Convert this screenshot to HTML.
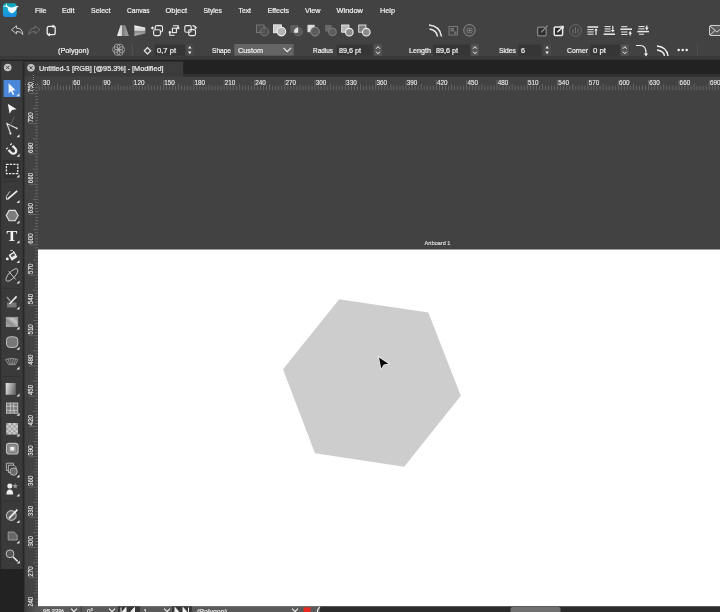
<!DOCTYPE html>
<html lang="en"><head><meta charset="utf-8"><title>Untitled-1 [RGB] - Polygon</title>
<style>
html,body{margin:0;padding:0;background:#424242;overflow:hidden}
body{width:720px;height:612px;font-family:"Liberation Sans",sans-serif}
svg{display:block;will-change:transform;filter:blur(0.35px);font-family:"Liberation Sans",sans-serif}
</style></head><body>
<svg width="720" height="612" viewBox="0 0 720 612">
<rect x="0" y="0" width="720" height="612" fill="#424242" />
<rect x="0" y="0" width="720" height="56" fill="#424242" />
<rect x="0" y="56" width="720" height="3.6" fill="#3a3a3a" />
<rect x="0" y="59.6" width="720" height="1.9" fill="#242424" />
<rect x="24.5" y="61" width="696" height="13" fill="#222222" />
<rect x="183" y="74" width="537" height="2.7" fill="#303030" />
<rect x="24.5" y="61.6" width="158.7" height="12.4" fill="#3c3c3c" />
<rect x="24.5" y="74" width="158.7" height="2.2" fill="#3a3a3a" />
<rect x="0" y="61" width="22.5" height="508" fill="#3a3a3a" />
<rect x="22.5" y="61" width="2" height="508" fill="#282828" />
<rect x="38" y="249.5" width="682" height="357" fill="#ffffff" />
<path d="M39.17 85.6V90.3M42.20 80V90.3M45.23 85.6V90.3M48.26 85.6V90.3M51.30 85.6V90.3M54.33 85.6V90.3M57.36 84V90.3M60.39 85.6V90.3M63.42 85.6V90.3M66.46 85.6V90.3M69.49 85.6V90.3M72.52 80V90.3M75.55 85.6V90.3M78.58 85.6V90.3M81.62 85.6V90.3M84.65 85.6V90.3M87.68 84V90.3M90.71 85.6V90.3M93.74 85.6V90.3M96.78 85.6V90.3M99.81 85.6V90.3M102.84 80V90.3M105.87 85.6V90.3M108.90 85.6V90.3M111.94 85.6V90.3M114.97 85.6V90.3M118.00 84V90.3M121.03 85.6V90.3M124.06 85.6V90.3M127.10 85.6V90.3M130.13 85.6V90.3M133.16 80V90.3M136.19 85.6V90.3M139.22 85.6V90.3M142.26 85.6V90.3M145.29 85.6V90.3M148.32 84V90.3M151.35 85.6V90.3M154.38 85.6V90.3M157.42 85.6V90.3M160.45 85.6V90.3M163.48 80V90.3M166.51 85.6V90.3M169.54 85.6V90.3M172.58 85.6V90.3M175.61 85.6V90.3M178.64 84V90.3M181.67 85.6V90.3M184.70 85.6V90.3M187.74 85.6V90.3M190.77 85.6V90.3M193.80 80V90.3M196.83 85.6V90.3M199.86 85.6V90.3M202.90 85.6V90.3M205.93 85.6V90.3M208.96 84V90.3M211.99 85.6V90.3M215.02 85.6V90.3M218.06 85.6V90.3M221.09 85.6V90.3M224.12 80V90.3M227.15 85.6V90.3M230.18 85.6V90.3M233.22 85.6V90.3M236.25 85.6V90.3M239.28 84V90.3M242.31 85.6V90.3M245.34 85.6V90.3M248.38 85.6V90.3M251.41 85.6V90.3M254.44 80V90.3M257.47 85.6V90.3M260.50 85.6V90.3M263.54 85.6V90.3M266.57 85.6V90.3M269.60 84V90.3M272.63 85.6V90.3M275.66 85.6V90.3M278.70 85.6V90.3M281.73 85.6V90.3M284.76 80V90.3M287.79 85.6V90.3M290.82 85.6V90.3M293.86 85.6V90.3M296.89 85.6V90.3M299.92 84V90.3M302.95 85.6V90.3M305.98 85.6V90.3M309.02 85.6V90.3M312.05 85.6V90.3M315.08 80V90.3M318.11 85.6V90.3M321.14 85.6V90.3M324.18 85.6V90.3M327.21 85.6V90.3M330.24 84V90.3M333.27 85.6V90.3M336.30 85.6V90.3M339.34 85.6V90.3M342.37 85.6V90.3M345.40 80V90.3M348.43 85.6V90.3M351.46 85.6V90.3M354.50 85.6V90.3M357.53 85.6V90.3M360.56 84V90.3M363.59 85.6V90.3M366.62 85.6V90.3M369.66 85.6V90.3M372.69 85.6V90.3M375.72 80V90.3M378.75 85.6V90.3M381.78 85.6V90.3M384.82 85.6V90.3M387.85 85.6V90.3M390.88 84V90.3M393.91 85.6V90.3M396.94 85.6V90.3M399.98 85.6V90.3M403.01 85.6V90.3M406.04 80V90.3M409.07 85.6V90.3M412.10 85.6V90.3M415.14 85.6V90.3M418.17 85.6V90.3M421.20 84V90.3M424.23 85.6V90.3M427.26 85.6V90.3M430.30 85.6V90.3M433.33 85.6V90.3M436.36 80V90.3M439.39 85.6V90.3M442.42 85.6V90.3M445.46 85.6V90.3M448.49 85.6V90.3M451.52 84V90.3M454.55 85.6V90.3M457.58 85.6V90.3M460.62 85.6V90.3M463.65 85.6V90.3M466.68 80V90.3M469.71 85.6V90.3M472.74 85.6V90.3M475.78 85.6V90.3M478.81 85.6V90.3M481.84 84V90.3M484.87 85.6V90.3M487.90 85.6V90.3M490.94 85.6V90.3M493.97 85.6V90.3M497.00 80V90.3M500.03 85.6V90.3M503.06 85.6V90.3M506.10 85.6V90.3M509.13 85.6V90.3M512.16 84V90.3M515.19 85.6V90.3M518.22 85.6V90.3M521.26 85.6V90.3M524.29 85.6V90.3M527.32 80V90.3M530.35 85.6V90.3M533.38 85.6V90.3M536.42 85.6V90.3M539.45 85.6V90.3M542.48 84V90.3M545.51 85.6V90.3M548.54 85.6V90.3M551.58 85.6V90.3M554.61 85.6V90.3M557.64 80V90.3M560.67 85.6V90.3M563.70 85.6V90.3M566.74 85.6V90.3M569.77 85.6V90.3M572.80 84V90.3M575.83 85.6V90.3M578.86 85.6V90.3M581.90 85.6V90.3M584.93 85.6V90.3M587.96 80V90.3M590.99 85.6V90.3M594.02 85.6V90.3M597.06 85.6V90.3M600.09 85.6V90.3M603.12 84V90.3M606.15 85.6V90.3M609.18 85.6V90.3M612.22 85.6V90.3M615.25 85.6V90.3M618.28 80V90.3M621.31 85.6V90.3M624.34 85.6V90.3M627.38 85.6V90.3M630.41 85.6V90.3M633.44 84V90.3M636.47 85.6V90.3M639.50 85.6V90.3M642.54 85.6V90.3M645.57 85.6V90.3M648.60 80V90.3M651.63 85.6V90.3M654.66 85.6V90.3M657.70 85.6V90.3M660.73 85.6V90.3M663.76 84V90.3M666.79 85.6V90.3M669.82 85.6V90.3M672.86 85.6V90.3M675.89 85.6V90.3M678.92 80V90.3M681.95 85.6V90.3M684.98 85.6V90.3M688.02 85.6V90.3M691.05 85.6V90.3M694.08 84V90.3M697.11 85.6V90.3M700.14 85.6V90.3M703.18 85.6V90.3M706.21 85.6V90.3M709.24 80V90.3M712.27 85.6V90.3M715.30 85.6V90.3M718.34 85.6V90.3M721.37 85.6V90.3" stroke="#707070" stroke-width="0.75" fill="none"/>
<text x="42.9" y="85.1" font-size="7" fill="#f0f0f0" stroke="#f0f0f0" stroke-width="0.1" textLength="7.0" lengthAdjust="spacingAndGlyphs" >30</text>
<text x="73.22" y="85.1" font-size="7" fill="#f0f0f0" stroke="#f0f0f0" stroke-width="0.1" textLength="7.0" lengthAdjust="spacingAndGlyphs" >60</text>
<text x="103.54" y="85.1" font-size="7" fill="#f0f0f0" stroke="#f0f0f0" stroke-width="0.1" textLength="7.0" lengthAdjust="spacingAndGlyphs" >90</text>
<text x="133.86" y="85.1" font-size="7" fill="#f0f0f0" stroke="#f0f0f0" stroke-width="0.1" textLength="10.6" lengthAdjust="spacingAndGlyphs" >120</text>
<text x="164.18" y="85.1" font-size="7" fill="#f0f0f0" stroke="#f0f0f0" stroke-width="0.1" textLength="10.6" lengthAdjust="spacingAndGlyphs" >150</text>
<text x="194.5" y="85.1" font-size="7" fill="#f0f0f0" stroke="#f0f0f0" stroke-width="0.1" textLength="10.6" lengthAdjust="spacingAndGlyphs" >180</text>
<text x="224.82" y="85.1" font-size="7" fill="#f0f0f0" stroke="#f0f0f0" stroke-width="0.1" textLength="10.6" lengthAdjust="spacingAndGlyphs" >210</text>
<text x="255.14" y="85.1" font-size="7" fill="#f0f0f0" stroke="#f0f0f0" stroke-width="0.1" textLength="10.6" lengthAdjust="spacingAndGlyphs" >240</text>
<text x="285.46" y="85.1" font-size="7" fill="#f0f0f0" stroke="#f0f0f0" stroke-width="0.1" textLength="10.6" lengthAdjust="spacingAndGlyphs" >270</text>
<text x="315.78" y="85.1" font-size="7" fill="#f0f0f0" stroke="#f0f0f0" stroke-width="0.1" textLength="10.6" lengthAdjust="spacingAndGlyphs" >300</text>
<text x="346.1" y="85.1" font-size="7" fill="#f0f0f0" stroke="#f0f0f0" stroke-width="0.1" textLength="10.6" lengthAdjust="spacingAndGlyphs" >330</text>
<text x="376.42" y="85.1" font-size="7" fill="#f0f0f0" stroke="#f0f0f0" stroke-width="0.1" textLength="10.6" lengthAdjust="spacingAndGlyphs" >360</text>
<text x="406.74" y="85.1" font-size="7" fill="#f0f0f0" stroke="#f0f0f0" stroke-width="0.1" textLength="10.6" lengthAdjust="spacingAndGlyphs" >390</text>
<text x="437.06" y="85.1" font-size="7" fill="#f0f0f0" stroke="#f0f0f0" stroke-width="0.1" textLength="10.6" lengthAdjust="spacingAndGlyphs" >420</text>
<text x="467.38" y="85.1" font-size="7" fill="#f0f0f0" stroke="#f0f0f0" stroke-width="0.1" textLength="10.6" lengthAdjust="spacingAndGlyphs" >450</text>
<text x="497.7" y="85.1" font-size="7" fill="#f0f0f0" stroke="#f0f0f0" stroke-width="0.1" textLength="10.6" lengthAdjust="spacingAndGlyphs" >480</text>
<text x="528.02" y="85.1" font-size="7" fill="#f0f0f0" stroke="#f0f0f0" stroke-width="0.1" textLength="10.6" lengthAdjust="spacingAndGlyphs" >510</text>
<text x="558.34" y="85.1" font-size="7" fill="#f0f0f0" stroke="#f0f0f0" stroke-width="0.1" textLength="10.6" lengthAdjust="spacingAndGlyphs" >540</text>
<text x="588.66" y="85.1" font-size="7" fill="#f0f0f0" stroke="#f0f0f0" stroke-width="0.1" textLength="10.6" lengthAdjust="spacingAndGlyphs" >570</text>
<text x="618.98" y="85.1" font-size="7" fill="#f0f0f0" stroke="#f0f0f0" stroke-width="0.1" textLength="10.6" lengthAdjust="spacingAndGlyphs" >600</text>
<text x="649.3" y="85.1" font-size="7" fill="#f0f0f0" stroke="#f0f0f0" stroke-width="0.1" textLength="10.6" lengthAdjust="spacingAndGlyphs" >630</text>
<text x="679.62" y="85.1" font-size="7" fill="#f0f0f0" stroke="#f0f0f0" stroke-width="0.1" textLength="10.6" lengthAdjust="spacingAndGlyphs" >660</text>
<text x="709.94" y="85.1" font-size="7" fill="#f0f0f0" stroke="#f0f0f0" stroke-width="0.1" textLength="10.6" lengthAdjust="spacingAndGlyphs" >690</text>
<text x="740.26" y="85.1" font-size="7" fill="#f0f0f0" stroke="#f0f0f0" stroke-width="0.1" textLength="10.6" lengthAdjust="spacingAndGlyphs" >720</text>
<path d="M35 605.15H38M35 602.12H38M35 599.10H38M35 596.07H38M33 593.04H38M35 590.01H38M35 586.98H38M35 583.96H38M35 580.93H38M29 577.90H38M35 574.87H38M35 571.84H38M35 568.82H38M35 565.79H38M33 562.76H38M35 559.73H38M35 556.70H38M35 553.68H38M35 550.65H38M29 547.62H38M35 544.59H38M35 541.56H38M35 538.54H38M35 535.51H38M33 532.48H38M35 529.45H38M35 526.42H38M35 523.40H38M35 520.37H38M29 517.34H38M35 514.31H38M35 511.28H38M35 508.26H38M35 505.23H38M33 502.20H38M35 499.17H38M35 496.14H38M35 493.12H38M35 490.09H38M29 487.06H38M35 484.03H38M35 481.00H38M35 477.98H38M35 474.95H38M33 471.92H38M35 468.89H38M35 465.86H38M35 462.84H38M35 459.81H38M29 456.78H38M35 453.75H38M35 450.72H38M35 447.70H38M35 444.67H38M33 441.64H38M35 438.61H38M35 435.58H38M35 432.56H38M35 429.53H38M29 426.50H38M35 423.47H38M35 420.44H38M35 417.42H38M35 414.39H38M33 411.36H38M35 408.33H38M35 405.30H38M35 402.28H38M35 399.25H38M29 396.22H38M35 393.19H38M35 390.16H38M35 387.14H38M35 384.11H38M33 381.08H38M35 378.05H38M35 375.02H38M35 372.00H38M35 368.97H38M29 365.94H38M35 362.91H38M35 359.88H38M35 356.86H38M35 353.83H38M33 350.80H38M35 347.77H38M35 344.74H38M35 341.72H38M35 338.69H38M29 335.66H38M35 332.63H38M35 329.60H38M35 326.58H38M35 323.55H38M33 320.52H38M35 317.49H38M35 314.46H38M35 311.44H38M35 308.41H38M29 305.38H38M35 302.35H38M35 299.32H38M35 296.30H38M35 293.27H38M33 290.24H38M35 287.21H38M35 284.18H38M35 281.16H38M35 278.13H38M29 275.10H38M35 272.07H38M35 269.04H38M35 266.02H38M35 262.99H38M33 259.96H38M35 256.93H38M35 253.90H38M35 250.88H38M35 247.85H38M29 244.82H38M35 241.79H38M35 238.76H38M35 235.74H38M35 232.71H38M33 229.68H38M35 226.65H38M35 223.62H38M35 220.60H38M35 217.57H38M29 214.54H38M35 211.51H38M35 208.48H38M35 205.46H38M35 202.43H38M33 199.40H38M35 196.37H38M35 193.34H38M35 190.32H38M35 187.29H38M29 184.26H38M35 181.23H38M35 178.20H38M35 175.18H38M35 172.15H38M33 169.12H38M35 166.09H38M35 163.06H38M35 160.04H38M35 157.01H38M29 153.98H38M35 150.95H38M35 147.92H38M35 144.90H38M35 141.87H38M33 138.84H38M35 135.81H38M35 132.78H38M35 129.76H38M35 126.73H38M29 123.70H38M35 120.67H38M35 117.64H38M35 114.62H38M35 111.59H38M33 108.56H38M35 105.53H38M35 102.50H38M35 99.48H38M35 96.45H38M29 93.42H38M35 90.39H38M35 87.36H38M35 84.34H38" stroke="#707070" stroke-width="0.75" fill="none"/>
<path d="M33.4 75V90M25 84.3H38" stroke="#a8a8a8" stroke-width="0.9" stroke-dasharray="1 1" fill="none"/><path d="M33.4 76V90M26 84.3H38" stroke="#1c1c1c" stroke-width="0.9" stroke-dasharray="1 1" fill="none"/>
<text transform="translate(33.3 607.08) rotate(-90)" font-size="7" fill="#f0f0f0" stroke="#f0f0f0" stroke-width="0.1" textLength="10.4" lengthAdjust="spacingAndGlyphs">240</text>
<text transform="translate(33.3 576.80) rotate(-90)" font-size="7" fill="#f0f0f0" stroke="#f0f0f0" stroke-width="0.1" textLength="10.4" lengthAdjust="spacingAndGlyphs">270</text>
<text transform="translate(33.3 546.52) rotate(-90)" font-size="7" fill="#f0f0f0" stroke="#f0f0f0" stroke-width="0.1" textLength="10.4" lengthAdjust="spacingAndGlyphs">300</text>
<text transform="translate(33.3 516.24) rotate(-90)" font-size="7" fill="#f0f0f0" stroke="#f0f0f0" stroke-width="0.1" textLength="10.4" lengthAdjust="spacingAndGlyphs">330</text>
<text transform="translate(33.3 485.96) rotate(-90)" font-size="7" fill="#f0f0f0" stroke="#f0f0f0" stroke-width="0.1" textLength="10.4" lengthAdjust="spacingAndGlyphs">360</text>
<text transform="translate(33.3 455.68) rotate(-90)" font-size="7" fill="#f0f0f0" stroke="#f0f0f0" stroke-width="0.1" textLength="10.4" lengthAdjust="spacingAndGlyphs">390</text>
<text transform="translate(33.3 425.40) rotate(-90)" font-size="7" fill="#f0f0f0" stroke="#f0f0f0" stroke-width="0.1" textLength="10.4" lengthAdjust="spacingAndGlyphs">420</text>
<text transform="translate(33.3 395.12) rotate(-90)" font-size="7" fill="#f0f0f0" stroke="#f0f0f0" stroke-width="0.1" textLength="10.4" lengthAdjust="spacingAndGlyphs">450</text>
<text transform="translate(33.3 364.84) rotate(-90)" font-size="7" fill="#f0f0f0" stroke="#f0f0f0" stroke-width="0.1" textLength="10.4" lengthAdjust="spacingAndGlyphs">480</text>
<text transform="translate(33.3 334.56) rotate(-90)" font-size="7" fill="#f0f0f0" stroke="#f0f0f0" stroke-width="0.1" textLength="10.4" lengthAdjust="spacingAndGlyphs">510</text>
<text transform="translate(33.3 304.28) rotate(-90)" font-size="7" fill="#f0f0f0" stroke="#f0f0f0" stroke-width="0.1" textLength="10.4" lengthAdjust="spacingAndGlyphs">540</text>
<text transform="translate(33.3 274.00) rotate(-90)" font-size="7" fill="#f0f0f0" stroke="#f0f0f0" stroke-width="0.1" textLength="10.4" lengthAdjust="spacingAndGlyphs">570</text>
<text transform="translate(33.3 243.72) rotate(-90)" font-size="7" fill="#f0f0f0" stroke="#f0f0f0" stroke-width="0.1" textLength="10.4" lengthAdjust="spacingAndGlyphs">600</text>
<text transform="translate(33.3 213.44) rotate(-90)" font-size="7" fill="#f0f0f0" stroke="#f0f0f0" stroke-width="0.1" textLength="10.4" lengthAdjust="spacingAndGlyphs">630</text>
<text transform="translate(33.3 183.16) rotate(-90)" font-size="7" fill="#f0f0f0" stroke="#f0f0f0" stroke-width="0.1" textLength="10.4" lengthAdjust="spacingAndGlyphs">660</text>
<text transform="translate(33.3 152.88) rotate(-90)" font-size="7" fill="#f0f0f0" stroke="#f0f0f0" stroke-width="0.1" textLength="10.4" lengthAdjust="spacingAndGlyphs">690</text>
<text transform="translate(33.3 122.60) rotate(-90)" font-size="7" fill="#f0f0f0" stroke="#f0f0f0" stroke-width="0.1" textLength="10.4" lengthAdjust="spacingAndGlyphs">720</text>
<text transform="translate(33.3 92.32) rotate(-90)" font-size="7" fill="#f0f0f0" stroke="#f0f0f0" stroke-width="0.1" textLength="10.4" lengthAdjust="spacingAndGlyphs">750</text>
<polygon points="339.2,299.2 428.3,312.5 460.8,395.8 404.2,466.7 315,453.3 283,369.2" fill="#cdcdcd"/>
<text x="424.6" y="245.1" font-size="6.2" fill="#e6e6e6" stroke="#e6e6e6" stroke-width="0.1" textLength="25.8" lengthAdjust="spacingAndGlyphs" >Artboard 1</text>
<path d="M379 357.4L388.4 363.7L383.8 364.6L381.2 368.4Z" fill="#060606" stroke="#f6f6f6" stroke-width="1.3" paint-order="stroke"/>
<text x="35" y="13.2" font-size="7.8" fill="#f0f0f0" stroke="#f0f0f0" stroke-width="0.22" textLength="11.5" lengthAdjust="spacingAndGlyphs" >File</text>
<text x="62" y="13.2" font-size="7.8" fill="#f0f0f0" stroke="#f0f0f0" stroke-width="0.22" textLength="12.5" lengthAdjust="spacingAndGlyphs" >Edit</text>
<text x="91" y="13.2" font-size="7.8" fill="#f0f0f0" stroke="#f0f0f0" stroke-width="0.22" textLength="19.5" lengthAdjust="spacingAndGlyphs" >Select</text>
<text x="127" y="13.2" font-size="7.8" fill="#f0f0f0" stroke="#f0f0f0" stroke-width="0.22" textLength="22.5" lengthAdjust="spacingAndGlyphs" >Canvas</text>
<text x="165.5" y="13.2" font-size="7.8" fill="#f0f0f0" stroke="#f0f0f0" stroke-width="0.22" textLength="21.5" lengthAdjust="spacingAndGlyphs" >Object</text>
<text x="203.5" y="13.2" font-size="7.8" fill="#f0f0f0" stroke="#f0f0f0" stroke-width="0.22" textLength="18.5" lengthAdjust="spacingAndGlyphs" >Styles</text>
<text x="238.5" y="13.2" font-size="7.8" fill="#f0f0f0" stroke="#f0f0f0" stroke-width="0.22" textLength="12.5" lengthAdjust="spacingAndGlyphs" >Text</text>
<text x="267.5" y="13.2" font-size="7.8" fill="#f0f0f0" stroke="#f0f0f0" stroke-width="0.22" textLength="21.5" lengthAdjust="spacingAndGlyphs" >Effects</text>
<text x="305" y="13.2" font-size="7.8" fill="#f0f0f0" stroke="#f0f0f0" stroke-width="0.22" textLength="15.5" lengthAdjust="spacingAndGlyphs" >View</text>
<text x="336.5" y="13.2" font-size="7.8" fill="#f0f0f0" stroke="#f0f0f0" stroke-width="0.22" textLength="26.5" lengthAdjust="spacingAndGlyphs" >Window</text>
<text x="380" y="13.2" font-size="7.8" fill="#f0f0f0" stroke="#f0f0f0" stroke-width="0.22" textLength="15" lengthAdjust="spacingAndGlyphs" >Help</text>
<defs><linearGradient id="lg" x1="0" y1="0" x2="0" y2="1"><stop offset="0" stop-color="#12a9b6"/><stop offset="0.45" stop-color="#14a6d2"/><stop offset="1" stop-color="#1c8de6"/></linearGradient></defs><rect x="2.9" y="3.2" width="13.8" height="13.8" rx="3" fill="url(#lg)"/><path d="M2.5 6.3L5.9 5.5L6.3 2.4L6.9 5.6L8.2 6.6Q12.4 8.6 16 6L19 6.1L17 7.6Q15.2 13 11.6 13.2Q8.2 12.6 7.6 7.6L5.6 6.8Z" fill="#f2fbff"/>
<rect x="154.5" y="44.5" width="30.5" height="11.2" fill="#363636" />
<rect x="336.5" y="44.5" width="36.0" height="11.2" fill="#363636" />
<rect x="433" y="44.5" width="37" height="11.2" fill="#363636" />
<rect x="518" y="44.5" width="23.5" height="11.2" fill="#363636" />
<rect x="590" y="44.5" width="30" height="11.2" fill="#363636" />
<rect x="234.3" y="44" width="59.4" height="11.6" fill="#646464" />
<text x="58" y="53.4" font-size="7.8" fill="#f0f0f0" stroke="#f0f0f0" stroke-width="0.22" textLength="31" lengthAdjust="spacingAndGlyphs" >(Polygon)</text>
<text x="157" y="53.4" font-size="7.8" fill="#f0f0f0" stroke="#f0f0f0" stroke-width="0.22" textLength="19" lengthAdjust="spacingAndGlyphs" >0,7 pt</text>
<text x="212" y="53.4" font-size="7.8" fill="#f0f0f0" stroke="#f0f0f0" stroke-width="0.22" textLength="19" lengthAdjust="spacingAndGlyphs" >Shape</text>
<text x="238" y="53.4" font-size="7.8" fill="#f0f0f0" stroke="#f0f0f0" stroke-width="0.22" textLength="25" lengthAdjust="spacingAndGlyphs" >Custom</text>
<text x="313" y="53.4" font-size="7.8" fill="#f0f0f0" stroke="#f0f0f0" stroke-width="0.22" textLength="20" lengthAdjust="spacingAndGlyphs" >Radius</text>
<text x="339" y="53.4" font-size="7.8" fill="#f0f0f0" stroke="#f0f0f0" stroke-width="0.22" textLength="22" lengthAdjust="spacingAndGlyphs" >89,6 pt</text>
<text x="409" y="53.4" font-size="7.8" fill="#f0f0f0" stroke="#f0f0f0" stroke-width="0.22" textLength="22" lengthAdjust="spacingAndGlyphs" >Length</text>
<text x="436" y="53.4" font-size="7.8" fill="#f0f0f0" stroke="#f0f0f0" stroke-width="0.22" textLength="22" lengthAdjust="spacingAndGlyphs" >89,6 pt</text>
<text x="499" y="53.4" font-size="7.8" fill="#f0f0f0" stroke="#f0f0f0" stroke-width="0.22" textLength="17" lengthAdjust="spacingAndGlyphs" >Sides</text>
<text x="521" y="53.4" font-size="7.8" fill="#f0f0f0" stroke="#f0f0f0" stroke-width="0.22" textLength="4" lengthAdjust="spacingAndGlyphs" >6</text>
<text x="567" y="53.4" font-size="7.8" fill="#f0f0f0" stroke="#f0f0f0" stroke-width="0.22" textLength="21" lengthAdjust="spacingAndGlyphs" >Corner</text>
<text x="593" y="53.4" font-size="7.8" fill="#f0f0f0" stroke="#f0f0f0" stroke-width="0.22" textLength="13" lengthAdjust="spacingAndGlyphs" >0 pt</text>
<path d="M283.5 47.8L287.2 51.6L291 47.8" stroke="#f0f0f0" stroke-width="1.2" fill="none"/>
<rect x="186" y="44.5" width="7.6" height="11.2" fill="#4a4a4a" />
<path d="M188.10000000000002 48.6L189.8 46L191.5 48.6ZM188.10000000000002 51.6L189.8 54.2L191.5 51.6Z" fill="#f0f0f0"/>
<rect x="374.2" y="44.5" width="7.6" height="11.2" fill="#555555" />
<path d="M376.1 48.7L378.0 46.7L379.9 48.7M376.1 51.7L378.0 53.7L379.9 51.7" stroke="#f0f0f0" stroke-width="1" fill="none"/>
<rect x="471.2" y="44.5" width="7.6" height="11.2" fill="#555555" />
<path d="M473.1 48.7L475.0 46.7L476.9 48.7M473.1 51.7L475.0 53.7L476.9 51.7" stroke="#f0f0f0" stroke-width="1" fill="none"/>
<rect x="543.3" y="44.5" width="7.6" height="11.2" fill="#4a4a4a" />
<path d="M545.3999999999999 48.6L547.0999999999999 46L548.8 48.6ZM545.3999999999999 51.6L547.0999999999999 54.2L548.8 51.6Z" fill="#f0f0f0"/>
<rect x="621" y="44.5" width="7.6" height="11.2" fill="#555555" />
<path d="M622.9 48.7L624.8 46.7L626.6999999999999 48.7M622.9 51.7L624.8 53.7L626.6999999999999 51.7" stroke="#f0f0f0" stroke-width="1" fill="none"/>
<rect x="131.8" y="44" width="0.8" height="12" fill="#5a5a5a" />
<rect x="697.2" y="44" width="0.8" height="12" fill="#525252" />
<g stroke="#bcbcbc" stroke-width="0.65" fill="none"><circle cx="121.60" cy="49.70" r="3.0"/><circle cx="120.10" cy="52.30" r="3.0"/><circle cx="117.10" cy="52.30" r="3.0"/><circle cx="115.60" cy="49.70" r="3.0"/><circle cx="117.10" cy="47.10" r="3.0"/><circle cx="120.10" cy="47.10" r="3.0"/></g>
<path d="M147.5 47.6L150.7 50.8L147.5 54L144.3 50.8Z" stroke="#f0f0f0" stroke-width="1.2" fill="none"/>
<path d="M636 45.5H640.5Q646 45.5 646 53V55" stroke="#f0f0f0" stroke-width="1.2" fill="none"/><path d="M644 53.5H648L646 56.5Z" fill="#f0f0f0"/>
<path d="M657 46Q667 47 668 56M657 50Q664 51 664.5 56" stroke="#f0f0f0" stroke-width="1.3" fill="none"/>
<circle cx="678.7" cy="50" r="1.25" fill="#f0f0f0"/>
<circle cx="682.7" cy="50" r="1.25" fill="#f0f0f0"/>
<circle cx="686.7" cy="50" r="1.25" fill="#f0f0f0"/>
<path d="M11.5 29.8L16.5 25.8V28.2Q22.5 28 22.8 34.5Q21 31.2 16.5 31.5V33.8Z" stroke="#d8d8d8" stroke-width="0.9" fill="none"/>
<path d="M40 29.8L35 25.8V28.2Q29 28 28.7 34.5Q30.5 31.2 35 31.5V33.8Z" stroke="#777" stroke-width="0.9" fill="none"/>
<rect x="47.2" y="26.3" width="8" height="8.4" rx="2" stroke="#ececec" stroke-width="1.3" fill="none"/><path d="M52.5 24.5L55.5 26.3L52.5 28.2ZM50 32.8L47 34.7L50 36.5Z" fill="#ececec"/>
<defs><linearGradient id="g1" x1="0" x2="1"><stop offset="0" stop-color="#f6f6f6"/><stop offset="0.45" stop-color="#cfcfcf"/><stop offset="0.45" stop-color="#7c7c7c"/><stop offset="1" stop-color="#a4a4a4"/></linearGradient><linearGradient id="g2" x1="0" x2="0" y1="0" y2="1"><stop offset="0" stop-color="#f6f6f6"/><stop offset="0.5" stop-color="#cacaca"/><stop offset="0.5" stop-color="#808080"/><stop offset="1" stop-color="#b4b4b4"/></linearGradient></defs>
<path d="M120.5 25.3H125.3L128.8 36H117Z" fill="url(#g1)"/>
<path d="M134.3 25.2L145.3 27.6V33.4L134.3 36Z" fill="url(#g2)"/>
<g stroke="#ececec" stroke-width="1.1" fill="none"><rect x="155.2" y="25.6" width="7.3" height="6.4" rx="1.6"/><rect x="153.6" y="29.8" width="6.8" height="5.8" rx="1.5" fill="#404040"/><path d="M154.4 28H152.4"/></g><path d="M150.6 28L153 26.2V29.8Z" fill="#ececec"/>
<g stroke="#ececec" stroke-width="1.1" fill="none"><rect x="172.4" y="28.2" width="4" height="4.4"/><path d="M169.8 33V35.2H174.6M173 25.8H178.2V27.4"/></g><circle cx="169.9" cy="32.3" r="1.25" fill="#ececec"/><circle cx="178.2" cy="28" r="1.25" fill="#ececec"/>
<g stroke="#ececec" stroke-width="1.1" fill="none"><rect x="184.8" y="25.6" width="6.4" height="6.6" rx="1.5"/><rect x="188.7" y="29.6" width="6.8" height="6" rx="1.5"/><path d="M192.5 25.6Q195.5 25.8 195.7 27.6"/></g><path d="M194.1 27.2H197.3L195.7 29.4Z" fill="#ececec"/>
<g stroke="#7c7c7c" stroke-width="0.9" fill="none"><rect x="256.5" y="25" width="7.6" height="7.6" fill="#4c4c4c"/><circle cx="264.4" cy="31.7" r="4.2" fill="#565656" fill-opacity="0.7"/></g>
<rect x="273.4" y="24.8" width="8" height="8" fill="#cfcfcf" stroke="#ededed" stroke-width="0.8"/><circle cx="281.4" cy="31.6" r="4.3" fill="#b4b4b4" stroke="#f2f2f2" stroke-width="1.1"/>
<rect x="290.4" y="25" width="7.8" height="7.8" fill="#5e5e5e"/><circle cx="298" cy="31.6" r="4.3" fill="#585858" stroke="#6a6a6a" stroke-width="0.9"/><path d="M294.2 30.5Q295 27.6 298.2 27.4V32.8H294Z" fill="#e4e4e4"/>
<rect x="307.5" y="24.8" width="7.2" height="7.4" fill="#dedede"/><circle cx="315" cy="31.6" r="4.4" fill="#5c5c5c" stroke="#8c8c8c" stroke-width="0.9"/>
<rect x="325.1" y="25" width="6.6" height="6.6" fill="#6a6a6a"/><circle cx="332.5" cy="32" r="3.9" fill="#5c5c5c" stroke="#808080" stroke-width="0.9"/>
<rect x="341.7" y="25" width="7.2" height="7.2" fill="#b4b4b4" stroke="#ececec" stroke-width="0.9"/><circle cx="349.3" cy="32.2" r="3.8" fill="#8c8c8c" stroke="#f2f2f2" stroke-width="1.1"/>
<rect x="358.7" y="25" width="7.2" height="7.2" fill="#7a7a7a" stroke="#e8e8e8" stroke-width="0.9"/><circle cx="366.3" cy="32.2" r="3.8" fill="#8a8a8a" stroke="#f2f2f2" stroke-width="1.1"/>
<path d="M429 25Q440 26 441.5 36.5M429.5 29Q436.5 30 437.5 36.5" stroke="#ececec" stroke-width="1.5" fill="none"/>
<g stroke="#808080" stroke-width="0.9" fill="none"><rect x="449" y="26.5" width="8.5" height="8.5"/></g><path d="M450.5 28H454V31.5H450.5ZM454 31.5H456.5V34H454Z" fill="#707070"/>
<circle cx="469.5" cy="30.3" r="5.7" stroke="#9a9a9a" stroke-width="0.9" fill="none"/><path d="M467 28.2H472V32.8H467ZM469.5 28.2V32.8M467 30.5H472" stroke="#8a8a8a" stroke-width="0.7" fill="none"/>
<rect x="537.6" y="27.2" width="8.6" height="8.6" rx="1.2" fill="#2e2e2e" stroke="#858585" stroke-width="1.3"/><path d="M543.6 25.6H548V29.8Z" fill="#404040"/><path d="M541.3 32.3L547.6 25.6" stroke="#8e8e8e" stroke-width="1.3"/>
<rect x="554.2" y="27" width="8.4" height="8.6" rx="1.3" fill="#2a2a2a" stroke="#ececec" stroke-width="1.5"/><path d="M559.6 24.8H565V30.4Z" fill="#404040"/><path d="M557.4 32.3L563 26.4" stroke="#ececec" stroke-width="1.4"/><path d="M560.4 25.8H563.8V29.2Z" fill="#ececec"/>
<circle cx="575.5" cy="30.4" r="5.9" stroke="#6e6e6e" stroke-width="0.9" fill="none"/><path d="M573 33.5V29M575.5 33.5V27M578 33.5V28.5" stroke="#767676" stroke-width="0.9"/>
<g stroke="#ececec" fill="none"><path d="M587.4 27H598.2" stroke-width="1.5"/><path d="M587.4 29.6H593.6M587.4 31.9H593.6M587.4 34.2H593.6" stroke-width="1"/><path d="M596 35V29.5" stroke-width="1.2"/><path d="M594.2 30.6L596 28.2L597.8 30.6Z" fill="#ececec" stroke="none"/></g>
<g stroke="#ececec" fill="none"><path d="M603.6 34.2H615" stroke-width="1.5"/><path d="M604.6 26.6H610.6M604.6 28.9H610.6M604.6 31.2H610.6" stroke-width="1"/><path d="M612.8 25.8V31" stroke-width="1.2"/><path d="M611 30L612.8 32.6L614.6 30Z" fill="#ececec" stroke="none"/></g>
<g stroke="#ececec" fill="none"><path d="M620.4 29.2H632" stroke-width="1.5"/><path d="M621.2 26.7H627.4M621.2 32H627.4M621.2 34.4H627.4" stroke-width="1"/><path d="M630.2 35.6V31.5" stroke-width="1.2"/><path d="M628.4 33.8L630.2 31.2L632 33.8Z" fill="#ececec" stroke="none"/></g>
<g stroke="#ececec" fill="none"><path d="M637.4 31.6H649" stroke-width="1.5"/><path d="M638.4 26.6H644.6M638.4 28.9H644.6M639 34.2H644" stroke-width="1"/><path d="M646.8 25.6V29" stroke-width="1.2"/><path d="M645 27.6L646.8 30.4L648.6 27.6Z" fill="#ececec" stroke="none"/></g>
<g stroke="#cfcfcf" stroke-width="1" fill="#5a5a5a"><rect x="709.5" y="25.5" width="14" height="10" rx="1.5"/><path d="M710 26L717 32L724 26M710 35L715 30.5" fill="none"/></g>
<circle cx="7.7" cy="67.5" r="3.8" fill="#c6c6c6"/><path d="M6.0 65.8L9.4 69.2M9.4 65.8L6.0 69.2" stroke="#444" stroke-width="1"/>
<circle cx="31" cy="67.8" r="3.8" fill="#c6c6c6"/><path d="M29.3 66.1L32.7 69.5M32.7 66.1L29.3 69.5" stroke="#444" stroke-width="1"/>
<text x="39" y="70.7" font-size="7.6" fill="#ececec" stroke="#ececec" stroke-width="0.22" textLength="124.5" lengthAdjust="spacingAndGlyphs" >Untitled-1 [RGB] [@95.3%] - [Modified]</text>
<rect x="0" y="61" width="1.3" height="508" fill="#2c2c2c" />
<rect x="3.6" y="80" width="16.8" height="17" fill="#4a87d9" />
<path d="M8.6 83.2L15.6 90.3L12.4 90.6L14.3 94.3L12.9 95L11 91.3L8.7 93.4Z" fill="#f4f8ff"/>
<path d="M19.4 93.3V96.3H16.4Z" fill="#e8e8e8"/>
<path d="M7.8 103.8L16.6 109.3L12 110L9.6 113.8Z" fill="#f4f4f4"/>
<path d="M6.6 122.8L10.6 133.6M6.8 123.6L17 128.4" stroke="#e0e0e0" stroke-width="1.15" fill="none"/><path d="M14.4 116.5L9.2 127.5" stroke="#6a6a6a" stroke-width="0.8"/><circle cx="10.5" cy="133.6" r="1.1" fill="#dcdcdc"/><circle cx="16.8" cy="128.4" r="0.9" fill="#dcdcdc"/>
<path d="M19.5 134.3V137.3H16.5Z" fill="#e8e8e8"/>
<path d="M12.6 145.9L15.4 148.8A2.9 2.9 0 0 1 11.2 152.8L8.5 150" stroke="#ececec" stroke-width="2.3" fill="none"/><path d="M10.6 143.8L11.5 144.7M6.6 148L7.5 148.9" stroke="#ececec" stroke-width="2.3"/>
<path d="M19.599999999999998 153.8V156.8H16.599999999999998Z" fill="#e8e8e8"/>
<rect x="3.2" y="160" width="17.3" height="18.4" fill="#303030" />
<rect x="6.4" y="164.4" width="11.4" height="9.2" stroke="#ececec" stroke-width="1.3" stroke-dasharray="2.3 1.1" fill="none"/>
<path d="M19.5 174.4V177.4H16.5Z" fill="#e8e8e8"/>
<rect x="3" y="181" width="17" height="0.9" fill="#303030" />
<path d="M17.2 190.8L7.6 199.2" stroke="#ececec" stroke-width="1.7" fill="none"/><path d="M9.8 191.4L6.3 196.6L6.6 199.6L8 199" stroke="#d8d8d8" stroke-width="0.9" fill="none"/>
<path d="M19.5 200V203H16.5Z" fill="#e8e8e8"/>
<path d="M9.2 210.4H15.2L18.2 215.6L15.2 220.8H9.2L6.2 215.6Z" fill="#7c7c7c" stroke="#e4e4e4" stroke-width="1.1"/>
<path d="M19.5 220.6V223.6H16.5Z" fill="#e8e8e8"/>
<text x="6.6" y="240.9" font-family="'Liberation Serif',serif" font-weight="bold" font-size="15.5" fill="#f4f4f4" textLength="10.8" lengthAdjust="spacingAndGlyphs">T</text>
<path d="M19.5 240.2V243.2H16.5Z" fill="#e8e8e8"/>
<path d="M8.6 255L14.2 251.6L17.4 257L11.8 260.8Z" fill="#ececec"/><path d="M10.6 255.2L13.8 253.3L15 255.3L11.8 257.2Z" fill="#4c4c4c"/><circle cx="7.3" cy="258.9" r="1.45" fill="#ececec"/><path d="M10.2 250.4Q12.6 249.6 14 252" stroke="#d8d8d8" stroke-width="0.9" fill="none"/>
<path d="M19.5 260V263H16.5Z" fill="#e8e8e8"/>
<ellipse cx="11.9" cy="275" rx="8" ry="3.2" transform="rotate(-47 11.9 275)" stroke="#c8c8c8" stroke-width="0.9" fill="none"/><path d="M8.6 271.2L15.6 279.4" stroke="#d4d4d4" stroke-width="0.9" fill="none"/>
<path d="M19.5 280.4V283.4H16.5Z" fill="#e8e8e8"/>
<rect x="3" y="288" width="17" height="0.9" fill="#303030" />
<path d="M7 302.5H16.5V307.5H7Z" fill="#777"/><path d="M9.5 304L16.6 296.4" stroke="#ececec" stroke-width="1.6"/><path d="M7 297L10.5 301.5" stroke="#9a9a9a" stroke-width="1.4"/>
<path d="M19.5 306.6V309.6H16.5Z" fill="#e8e8e8"/>
<defs><linearGradient id="t12" x1="0" y1="1" x2="1" y2="0"><stop offset="0" stop-color="#b4b4b4"/><stop offset="0.35" stop-color="#8c8c8c"/><stop offset="0.65" stop-color="#c4c4c4"/><stop offset="1" stop-color="#8a8a8a"/></linearGradient><linearGradient id="t15" x1="0" y1="0" x2="1" y2="0.3"><stop offset="0" stop-color="#e8e8e8"/><stop offset="1" stop-color="#707070"/></linearGradient><pattern id="chk" x="6.2" y="423" width="4.7" height="4.7" patternUnits="userSpaceOnUse"><rect width="4.7" height="4.7" fill="#d4d4d4"/><rect width="2.35" height="2.35" fill="#9a9a9a"/><rect x="2.35" y="2.35" width="2.35" height="2.35" fill="#9a9a9a"/></pattern></defs>
<rect x="6.2" y="317.3" width="11.6" height="9.4" fill="url(#t12)" stroke="#a8a8a8" stroke-width="0.7"/>
<path d="M19.5 326.4V329.4H16.5Z" fill="#e8e8e8"/>
<rect x="6.5" y="336.8" width="11.3" height="10.6" rx="3.4" fill="#787878" stroke="#c8c8c8" stroke-width="0.9"/>
<path d="M19.5 346.8V349.8H16.5Z" fill="#e8e8e8"/>
<path d="M5.6 359.4L8.6 364.6H15.4L17.8 359.4M8 359L10 364.4M10.6 358.8L11.4 364.4M13.2 358.8L12.6 364.4M15.6 359L14 364.4M5.6 359.4Q11.8 357.4 17.8 359.4" stroke="#a4a4a4" stroke-width="0.8" fill="none"/>
<path d="M19.5 366.6V369.6H16.5Z" fill="#e8e8e8"/>
<rect x="3" y="376" width="17" height="0.9" fill="#303030" />
<rect x="5.7" y="383" width="10" height="11.8" fill="url(#t15)" />
<path d="M19.5 393.6V396.6H16.5Z" fill="#e8e8e8"/>
<g stroke="#cccccc" stroke-width="0.8" fill="#7a7a7a"><rect x="6.4" y="403" width="11.4" height="10.2"/><path d="M6.4 406.5Q12 405 17.8 407M6.4 410Q12 411.5 17.8 410M10.2 402.8Q11 408 10 413.6M14 402.8Q13 408 14.4 413.6" fill="none"/></g>
<path d="M19.5 412.8V415.8H16.5Z" fill="#e8e8e8"/>
<rect x="6.2" y="423" width="11.8" height="11.6" fill="url(#chk)" />
<path d="M19.5 433.6V436.6H16.5Z" fill="#e8e8e8"/>
<rect x="6.5" y="443.4" width="11.6" height="10.6" rx="2.6" fill="#7e7e7e" stroke="#bdbdbd" stroke-width="1.1"/><rect x="8.6" y="445.4" width="7.4" height="6.6" rx="1.2" fill="#969696"/><rect x="10.4" y="447" width="3.8" height="3.5" fill="#f2f2f2"/>
<g stroke="#c4c4c4" stroke-width="0.85" fill="none"><path d="M6.4 463.2H13.4V470.4H6.4Z"/><path d="M8.4 465.2H14L16 467.2V472.6H8.4Z" fill="#3a3a3a"/><circle cx="13.6" cy="471.6" r="3.7" fill="#6a6a6a"/></g>
<path d="M19.5 474.6V477.6H16.5Z" fill="#e8e8e8"/>
<circle cx="9.8" cy="486" r="2.5" fill="#ececec"/><path d="M6.4 494.6Q6.4 489.5 9.8 489.5Q13.2 489.5 13.2 494.6Z" fill="#ececec"/><path d="M15.2 483L15.9 485L18 485.2L16.4 486.5L16.9 488.6L15.2 487.4L13.5 488.6L14 486.5L12.4 485.2L14.5 485Z" fill="#9a9a9a"/>
<path d="M19.5 493.6V496.6H16.5Z" fill="#e8e8e8"/>
<rect x="3" y="500.5" width="17" height="0.9" fill="#303030" />
<circle cx="11.3" cy="515.5" r="4.9" stroke="#b8b8b8" stroke-width="1.1" fill="#626262"/><path d="M9 518.4L17.4 509.6" stroke="#f2f2f2" stroke-width="1.6"/>
<path d="M19.5 520V523H16.5Z" fill="#e8e8e8"/>
<path d="M8.2 532H14.2L17.2 535V540H8.2Z" fill="#686868" stroke="#a0a0a0" stroke-width="0.9"/>
<path d="M19.5 540.4V543.4H16.5Z" fill="#e8e8e8"/>
<circle cx="10" cy="553.8" r="3.9" stroke="#c0c0c0" stroke-width="1" fill="#565656"/><path d="M13 556.8L17.6 561.4" stroke="#ececec" stroke-width="1.5"/>
<path d="M19.8 560.6V563.6H16.8Z" fill="#e8e8e8"/>
<defs><linearGradient id="sbg" x1="0" x2="1"><stop offset="0" stop-color="#3e3e3e"/><stop offset="1" stop-color="#5a5a5a"/></linearGradient></defs>
<rect x="0" y="569" width="24.5" height="43" fill="#222222" />
<rect x="24.5" y="606.3" width="14" height="6" fill="url(#sbg)" />
<rect x="38.5" y="606.3" width="281.5" height="6" fill="#5a5a5a" />
<rect x="320" y="606.4" width="400" height="6" fill="#2b2b2b" />
<rect x="118" y="606.4" width="22" height="6" fill="#383838" />
<rect x="172" y="606.4" width="20" height="6" fill="#383838" />
<rect x="80.6" y="606.4" width="0.9" height="6" fill="#3a3a3a" />
<text x="43" y="614" font-size="7.2" fill="#e6e6e6" stroke="#e6e6e6" stroke-width="0.22" textLength="21" lengthAdjust="spacingAndGlyphs" >95.33%</text>
<text x="87" y="614" font-size="7.2" fill="#e6e6e6" stroke="#e6e6e6" stroke-width="0.22" textLength="6" lengthAdjust="spacingAndGlyphs" >0°</text>
<text x="143.5" y="614" font-size="7.2" fill="#e6e6e6" stroke="#e6e6e6" stroke-width="0.22" textLength="3.5" lengthAdjust="spacingAndGlyphs" >1</text>
<text x="197" y="614" font-size="7.2" fill="#e6e6e6" stroke="#e6e6e6" stroke-width="0.22" textLength="30" lengthAdjust="spacingAndGlyphs" >(Polygon)</text>
<path d="M71 608.6L74 611.6L77 608.6" stroke="#f0f0f0" stroke-width="1.1" fill="none"/>
<path d="M109 608.6L112 611.6L115 608.6" stroke="#f0f0f0" stroke-width="1.1" fill="none"/>
<path d="M164 608.6L167 611.6L170 608.6" stroke="#f0f0f0" stroke-width="1.1" fill="none"/>
<path d="M292 608.6L295 611.6L298 608.6" stroke="#f0f0f0" stroke-width="1.1" fill="none"/>
<path d="M121 607.5V613M126 607.5L122.5 611.5L126 615ZM134.5 607.5L131 611.5L134.5 615ZM175 607.5L178.5 611.5L175 615ZM183 607.5L186.5 611.5L183 615ZM188.5 607.5V613" fill="#f0f0f0" stroke="#f0f0f0" stroke-width="1"/>
<rect x="303.6" y="607.4" width="7" height="6" fill="#e8281e" />
<path d="M320 607Q317 609 317.5 613" stroke="#e8e8e8" stroke-width="1.2" fill="none"/>
<rect x="510.5" y="607" width="50" height="8" rx="2" fill="#707070"/>
</svg>
</body></html>
